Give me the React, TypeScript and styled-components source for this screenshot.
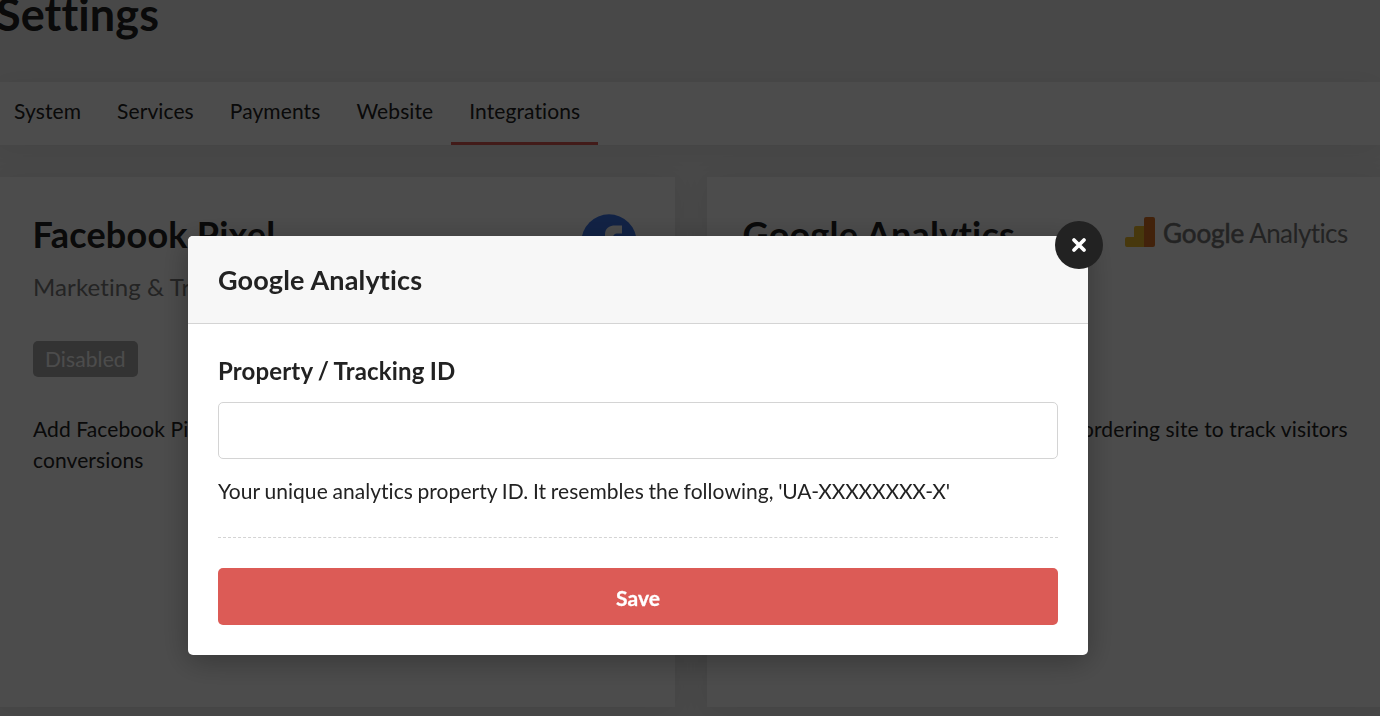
import React from "react";
import styled, { createGlobalStyle } from "styled-components";

const GlobalStyle = createGlobalStyle`
  * { box-sizing: border-box; }
  html, body { margin: 0; height: 100%; overflow: hidden; }
  body {
    background: #f2f2f2;
    color: #222;
    font-family: Lato, "Liberation Sans", sans-serif;
    font-size: 21px;
    font-variant-ligatures: none;
    letter-spacing: 0.1px;
    line-height: 31px;
  }
  h1, h2, h3, p { margin: 0; }
`;

const Page = styled.div`
  height: 716px;
  overflow: hidden;
`;

const Title = styled.h1`
  height: 82px;
  margin: -13px 0 13px -4px;
  font-size: 45px;
  font-weight: 700;
  line-height: 54px;
`;

const Tabs = styled.nav`
  display: flex;
  height: 63px;
  margin-left: -4px;
  background: #fff;
  box-shadow: 0 3px 30px rgba(0, 0, 0, 0.07);
`;

const Tab = styled.a<{ $active?: boolean }>`
  padding: 13px 18px 0;
  color: #222;
  border-bottom: 3px solid ${(p) => (p.$active ? "#dc5b56" : "transparent")};
`;

const Cards = styled.div`
  display: grid;
  grid-template-columns: 678px 678px;
  gap: 32px;
  margin: 32px 0 0 -3px;
`;

const Card = styled.section`
  height: 530px;
  padding: 36px 33px 0 36px;
  background: #fff;
  box-shadow: 0 3px 30px rgba(0, 0, 0, 0.07);
`;

const CardHead = styled.div`
  display: flex;
  justify-content: space-between;
  height: 54px;
`;

const CardTitle = styled.h2`
  margin-left: -0.5px;
  font-size: 36px;
  font-weight: 700;
  line-height: 42px;
  letter-spacing: 0.22px;
`;

const Subtitle = styled.p`
  color: #7a7a7a;
  font-size: 24px;
  line-height: 40px;
`;

const Badge = styled.span`
  display: inline-block;
  height: 36px;
  margin-top: 34px;
  padding: 0 12px;
  border-radius: 5px;
  background: #aaa;
  color: #fff;
  line-height: 36px;
`;

const Description = styled.p`
  width: 620px;
  margin-top: 36px;
`;

const FacebookLogo = styled.svg`
  width: 56px;
  height: 56px;
  margin: 1px 5px 0 0;
`;

const AnalyticsLogo = styled.div`
  display: flex;
  width: 227px;
  height: 30px;
  margin-top: 4px;
  gap: 8px;
`;

const Wordmark = styled.span`
  color: #777;
  font-size: 26px;
  line-height: 32px;
  letter-spacing: -0.6px;
  white-space: nowrap;
`;

const WordmarkStrong = styled.span`
  letter-spacing: -0.1px;
  -webkit-text-stroke: 0.6px #777;
`;

const Overlay = styled.div`
  position: fixed;
  inset: 0;
  padding: 236px 0 0 188px;
  background: rgba(0, 0, 0, 0.7);
`;

const Modal = styled.div`
  position: relative;
  width: 900px;
  height: 419px;
  border-radius: 5px;
  background: #fff;
  box-shadow: 0 6px 30px rgba(0, 0, 0, 0.3);
`;

const ModalHeader = styled.header`
  height: 88px;
  padding: 0 30px;
  border-bottom: 1px solid #d4d4d4;
  border-radius: 5px 5px 0 0;
  background: #f7f7f7;
`;

const ModalTitle = styled.h3`
  font-size: 27px;
  font-weight: 700;
  line-height: 88px;
  letter-spacing: 0.15px;
`;

const ModalBody = styled.form`
  padding: 30px;
`;

const Label = styled.label`
  display: block;
  height: 36px;
  font-size: 24px;
  font-weight: 700;
  line-height: 34px;
  letter-spacing: 0.15px;
  word-spacing: -0.8px;
`;

const Input = styled.input`
  display: block;
  width: 100%;
  height: 57px;
  margin-top: 12px;
  padding: 0 15px;
  border: 1px solid #d4d4d4;
  border-radius: 5px;
  background: #fff;
  font: inherit;
  outline: none;
`;

const Hint = styled.p`
  height: 79px;
  padding-top: 16px;
  border-bottom: 1px dashed #d4d4d4;
  letter-spacing: 0.05px;
  word-spacing: -0.8px;
`;

const SampleId = styled.span`
  letter-spacing: -0.2px;
`;

const SaveButton = styled.button`
  display: block;
  width: 100%;
  height: 57px;
  margin-top: 30px;
  padding: 1px 0 0;
  border: 0;
  border-radius: 5px;
  background: #dc5b56;
  color: #fff;
  font: 700 21px/31px Lato, "Liberation Sans", sans-serif;
  -webkit-text-stroke: 0.3px #fff;
`;

const CloseButton = styled.button`
  position: absolute;
  top: -15px;
  right: -15px;
  display: grid;
  place-items: center;
  width: 48px;
  height: 48px;
  padding: 0 0 1px;
  border: 0;
  border-radius: 50%;
  background: #222;
`;

const tabs = ["System", "Services", "Payments", "Website", "Integrations"];

export default function App() {
  return (
    <>
      <GlobalStyle />
      <Page>
        <Title>Settings</Title>
        <Tabs>
          {tabs.map((t) => (
            <Tab key={t} $active={t === "Integrations"}>{t}</Tab>
          ))}
        </Tabs>
        <Cards>
          <Card>
            <CardHead>
              <CardTitle>Facebook Pixel</CardTitle>
              <FacebookLogo viewBox="0 0 56 56">
                <circle cx="28" cy="28" r="27.700" fill="#3b74e8" />
                <path d="M24 56V35h-7v-8h7v-6c0-7 4-9.500 10.500-9.500h6.500v8h-4c-4 0-5 2-5 4.500V27h8.500l-1.500 8h-7v21z" fill="#fff" />
              </FacebookLogo>
            </CardHead>
            <Subtitle>Marketing &amp; Tracking</Subtitle>
            <Badge>Disabled</Badge>
            <Description>Add Facebook Pixel to your online ordering site to track conversions</Description>
          </Card>
          <Card>
            <CardHead>
              <CardTitle>Google Analytics</CardTitle>
              <AnalyticsLogo>
                <svg width="30" height="30" viewBox="0 0 30 30">
                  <path d="M0 22q0-2 2-2h7v-9q0-2 2-2h8v21H2q-2 0-2-2z" fill="#eebb2c" />
                  <path d="M19 2q0-2 2-2h7q2 0 2 2v26q0 2-2 2h-9z" fill="#dd7426" />
                </svg>
                <Wordmark><WordmarkStrong>Google</WordmarkStrong> Analytics</Wordmark>
              </AnalyticsLogo>
            </CardHead>
            <Subtitle>Analytics</Subtitle>
            <Badge>Disabled</Badge>
            <Description>Add Google Analytics to your online ordering site to track visitors</Description>
          </Card>
        </Cards>
      </Page>
      <Overlay>
        <Modal role="dialog" aria-label="Google Analytics">
          <ModalHeader>
            <ModalTitle>Google Analytics</ModalTitle>
          </ModalHeader>
          <ModalBody>
            <Label htmlFor="tracking">Property / Tracking ID</Label>
            <Input id="tracking" />
            <Hint>
              Your unique analytics property ID. It resembles the following, <SampleId>'UA-XXXXXXXX-X'</SampleId>
            </Hint>
            <SaveButton type="button">Save</SaveButton>
          </ModalBody>
          <CloseButton aria-label="Close">
            <svg width="16" height="16" viewBox="0 0 16 16">
              <path d="M3 3l10 10M13 3L3 13" stroke="#fff" strokeWidth="3.8" strokeLinecap="round" />
            </svg>
          </CloseButton>
        </Modal>
      </Overlay>
    </>
  );
}
